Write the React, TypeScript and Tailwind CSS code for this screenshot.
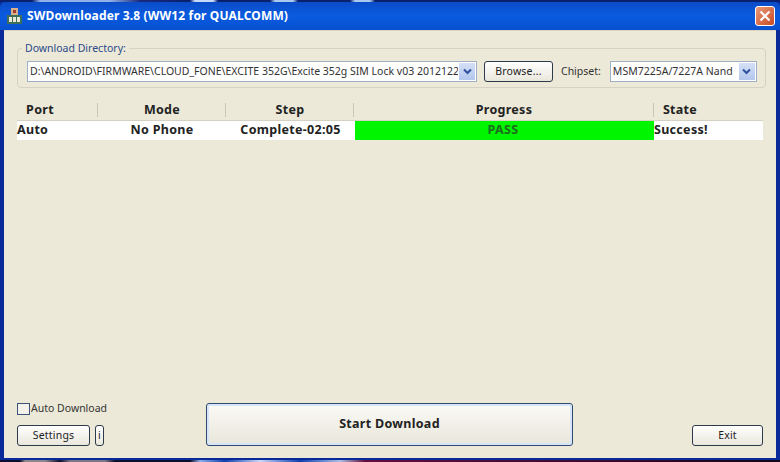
const ui = { fontFamily: '"Noto Sans", Tahoma, sans-serif' };

function Chevron() {
  return (
    <svg width="9" height="7" viewBox="0 0 9 7">
      <path d="M1 1.5 L4.5 5 L8 1.5" fill="none" stroke="#2f4f9f" strokeWidth="2" />
    </svg>
  );
}

function Combo({ text, className }: { text: string; className: string }) {
  return (
    <div className={`flex h-[21px] items-center border border-[#9fb0c4] bg-white ${className}`}>
      <span className="flex-1 overflow-hidden whitespace-nowrap pl-[2px] text-[10.5px] leading-[15px] text-[#333]">{text}</span>
      <span className="m-px flex h-[17px] w-[16px] shrink-0 items-center justify-center bg-gradient-to-b from-[#d5e0f5] to-[#b3c6ec]">
        <Chevron />
      </span>
    </div>
  );
}

function Btn({ children, className }: { children: React.ReactNode; className: string }) {
  return (
    <div
      className={`flex items-center justify-center rounded-[3px] border border-[#2c3a4c] bg-gradient-to-b from-white to-[#e9e7dc] text-[10.5px] tracking-[0.2px] text-[#222] ${className}`}
    >
      {children}
    </div>
  );
}

function HeadCell({ text, className }: { text: string; className: string }) {
  return (
    <div className={`relative flex h-full items-center justify-center pt-[1px] text-[12.5px] font-bold tracking-[0.3px] text-[#222] ${className}`}>
      {text}
      <span className="absolute right-0 top-[3px] h-[14px] w-px bg-[#c9c6b6]" />
    </div>
  );
}

export default function App() {
  return (
    <div style={ui} className="flex h-[462px] w-[780px] flex-col overflow-hidden bg-[#0a2a9a]">
      {/* wallpaper showing above the window */}
      <div className="h-[2px] shrink-0 bg-[linear-gradient(90deg,#0a1f6e_0,#0a1f6e_32px,#8fb0e8_40px,#8fb0e8_110px,#1a2a80_140px,#0a1f6e_190px,#c8d8f8_195px,#c8d8f8_213px,#0a1f6e_218px,#0a1f6e_270px,#a8c8f0_275px,#a8c8f0_293px,#0a1f6e_298px,#0a1f6e_350px,#a8c8f0_355px,#a8c8f0_370px,#0a1f6e_375px,#0a1f6e_100%)]" />

      {/* title bar */}
      <div className="flex h-[28px] shrink-0 items-center rounded-t-[5px] bg-gradient-to-b from-[#0a4cc8] via-[#0a5be0] to-[#0650d0] pl-[7px] pr-[5px]">
        <svg width="15" height="16" viewBox="0 0 15 16" className="mr-[5px]">
          <rect x="4" y="0" width="7" height="7" fill="#d9b08a" />
          <rect x="6" y="2" width="3" height="3" fill="#a33a2a" />
          <rect x="0" y="7" width="15" height="9" fill="#3d6f5a" />
          <rect x="2" y="9" width="3" height="5" fill="#e8e8d8" />
          <rect x="6" y="9" width="3" height="5" fill="#e8e8d8" />
          <rect x="10" y="9" width="3" height="5" fill="#e8e8d8" />
        </svg>
        <span className="flex-1 text-[12px] font-bold tracking-[0.15px] text-white">SWDownloader 3.8 (WW12 for QUALCOMM)</span>
        <div className="mb-[1px] flex h-[20px] w-[20px] items-center justify-center rounded-[3px] border border-white bg-gradient-to-br from-[#e89a78] to-[#c8481f]">
          <svg width="12" height="12" viewBox="0 0 12 12">
            <path d="M1.5 1.5 L10.5 10.5 M10.5 1.5 L1.5 10.5" stroke="white" strokeWidth="2.2" />
          </svg>
        </div>
      </div>

      {/* window body */}
      <div className="mx-[4px] mb-[2px] flex min-h-0 flex-1 flex-col border-t border-[#d8d4c0] bg-[#ece9d8] px-[13px] pb-[12px]">
        <fieldset className="mt-[11px] flex h-[46px] items-start rounded-[4px] border border-[#d6d3c4] pl-[9px] pr-[8px] pt-[6px]">
          <legend className="ml-[-5px] px-[3px] text-[10.5px] leading-[13px] text-[#2a4a8a]">Download Directory:</legend>
          <Combo className="w-[450px]" text="D:\ANDROID\FIRMWARE\CLOUD_FONE\EXCITE 352G\Excite 352g SIM Lock v03 20121221" />
          <Btn className="ml-[7px] h-[21px] w-[69px]">Browse...</Btn>
          <span className="ml-[8px] mt-[3px] text-[10.5px] leading-[15px] text-[#333]">Chipset:</span>
          <Combo className="ml-[9px] w-[147px]" text="MSM7225A/7227A Nand" />
        </fieldset>

        {/* table */}
        <div className="mt-[12px] flex h-[20px] shrink-0 pr-[2px]">
          <HeadCell className="w-[81px] pr-[35px]" text="Port" />
          <HeadCell className="w-[128px]" text="Mode" />
          <HeadCell className="w-[128px]" text="Step" />
          <HeadCell className="w-[300px]" text="Progress" />
          <div className="flex w-[52px] items-center justify-center pt-[1px] text-[12.5px] font-bold tracking-[0.3px] text-[#222]">State</div>
        </div>
        <div className="flex h-[20px] shrink-0 items-center border-t border-[#d4d1c2] bg-white text-[12.5px] font-bold tracking-[0.3px] text-[#222]">
          <div className="w-[81px]">Auto</div>
          <div className="w-[128px] text-center">No Phone</div>
          <div className="w-[129px] text-center">Complete-02:05</div>
          <div className="flex h-full w-[299px] items-center justify-center bg-[#00f500] pr-[3px] text-[#1f6a1f]">PASS</div>
          <div>Success!</div>
        </div>

        <div className="flex-1" />

        {/* bottom controls */}
        <div className="flex items-end">
          <div className="flex w-[189px] flex-col">
            <div className="flex items-center gap-[1px]">
              <span className="h-[12px] w-[13px] border border-[#3b5578] bg-[#f4f2ea]" />
              <span className="text-[10.5px] leading-[15px] text-[#333]">Auto Download</span>
            </div>
            <div className="mt-[9px] flex gap-[5px]">
              <Btn className="h-[21px] w-[73px]">Settings</Btn>
              <Btn className="h-[21px] w-[9px]">i</Btn>
            </div>
          </div>
          <div className="flex h-[43px] w-[367px] items-center justify-center rounded-[3px] border border-[#2f4a70] bg-gradient-to-b from-[#fbfaf6] to-[#e8e6da] text-[12.5px] font-bold tracking-[0.3px] text-[#222] shadow-[inset_0_0_0_2px_#d6e6f8]">
            Start Download
          </div>
          <div className="flex-1" />
          <Btn className="h-[21px] w-[71px]">Exit</Btn>
        </div>
      </div>

      {/* wallpaper showing below the window */}
      <div className="h-[2px] shrink-0 bg-[linear-gradient(90deg,#0a1030_0,#0a1030_20px,#8a8a90_25px,#8a8a90_45px,#0a1030_60px,#7a7a88_70px,#7a7a88_105px,#0a1030_115px,#0a1030_190px,#8fb0e8_200px,#1040b0_225px,#c8d8f8_260px,#1040b0_300px,#a8c0e8_340px,#601040_365px,#3a0a30_600px,#100818_100%)]" />
    </div>
  );
}
